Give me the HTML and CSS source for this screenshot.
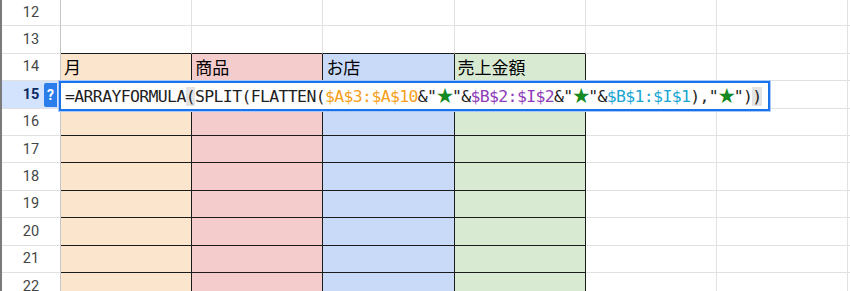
FILE: index.html
```html
<!DOCTYPE html>
<html lang="ja">
  <head>
    <meta charset="UTF-8" />
    <meta name="viewport" content="width=device-width, initial-scale=1.0" />
    <title>Sheet</title>
    <link rel="stylesheet" href="styles.css">
  </head>
  <body>
    <div class="sheet">
      <!-- row 12 -->
      <div class="rh">12</div>
      <div class="cell"></div><div class="cell"></div><div class="cell"></div><div class="cell"></div>
      <div class="cell"></div><div class="cell"></div><div class="cell"></div>
      <!-- row 13 -->
      <div class="rh">13</div>
      <div class="cell top-edge"></div><div class="cell top-edge"></div><div class="cell top-edge"></div><div class="cell top-edge"></div>
      <div class="cell"></div><div class="cell"></div><div class="cell"></div>
      <!-- row 14: headers -->
      <div class="rh">14</div>
      <div class="cell data month head">月</div>
      <div class="cell data item head">商品</div>
      <div class="cell data shop head">お店</div>
      <div class="cell data sales head">売上金額</div>
      <div class="cell"></div><div class="cell"></div><div class="cell"></div>
      <!-- row 15 -->
      <div class="rh selected">15</div>
      <div class="cell data month"></div><div class="cell data item"></div><div class="cell data shop"></div><div class="cell data sales"></div>
      <div class="cell"></div><div class="cell"></div><div class="cell"></div>
      <!-- row 16 -->
      <div class="rh">16</div>
      <div class="cell data month"></div><div class="cell data item"></div><div class="cell data shop"></div><div class="cell data sales"></div>
      <div class="cell"></div><div class="cell"></div><div class="cell"></div>
      <!-- row 17 -->
      <div class="rh">17</div>
      <div class="cell data month"></div><div class="cell data item"></div><div class="cell data shop"></div><div class="cell data sales"></div>
      <div class="cell"></div><div class="cell"></div><div class="cell"></div>
      <!-- row 18 -->
      <div class="rh">18</div>
      <div class="cell data month"></div><div class="cell data item"></div><div class="cell data shop"></div><div class="cell data sales"></div>
      <div class="cell"></div><div class="cell"></div><div class="cell"></div>
      <!-- row 19 -->
      <div class="rh">19</div>
      <div class="cell data month"></div><div class="cell data item"></div><div class="cell data shop"></div><div class="cell data sales"></div>
      <div class="cell"></div><div class="cell"></div><div class="cell"></div>
      <!-- row 20 -->
      <div class="rh">20</div>
      <div class="cell data month"></div><div class="cell data item"></div><div class="cell data shop"></div><div class="cell data sales"></div>
      <div class="cell"></div><div class="cell"></div><div class="cell"></div>
      <!-- row 21 -->
      <div class="rh">21</div>
      <div class="cell data month"></div><div class="cell data item"></div><div class="cell data shop"></div><div class="cell data sales"></div>
      <div class="cell"></div><div class="cell"></div><div class="cell"></div>
      <!-- row 22 -->
      <div class="rh">22</div>
      <div class="cell data month"></div><div class="cell data item"></div><div class="cell data shop"></div><div class="cell data sales"></div>
      <div class="cell"></div><div class="cell"></div><div class="cell"></div>

      <!-- formula being edited in B15 area -->
      <div class="editor">
        <div class="hint">?</div>
        <div class="formula">=ARRAYFORMULA<span class="match">(</span>SPLIT(FLATTEN(<span class="ref1">$A$3:$A$10</span>&amp;"<span class="star">★</span>"&amp;<span class="ref2">$B$2:$I$2</span>&amp;"<span class="star">★</span>"&amp;<span class="ref3">$B$1:$I$1</span>),"<span class="star">★</span>")<span class="match">)</span></div>
      </div>
    </div>
  </body>
</html>
```

FILE: styles.css
```css
* {
  margin: 0;
  padding: 0;
  box-sizing: border-box;
}
body {
  background: #fff;
  overflow: hidden;
  font-family: Roboto, "Liberation Sans", Arial, sans-serif;
}

.sheet {
  position: relative;
  display: grid;
  grid-template-columns: 59px repeat(7, 131.2px);
  grid-auto-rows: 27.4px;
  margin-top: -1px;
  border-left: 2px solid #7b7b7b;
}

.rh {
  display: flex;
  align-items: center;
  justify-content: center;
  font-size: 14.5px;
  color: #444746;
  border-right: 1px solid #c4c7c5;
  border-bottom: 1px solid #e1e1e1;
}
.rh.selected {
  background-color: #d3e3fd;
  color: #0b2a63;
  font-weight: 700;
}

.cell {
  border-right: 1px solid #e1e1e1;
  border-bottom: 1px solid #e1e1e1;
}
.cell.top-edge {
  border-bottom-color: #1b1b1b;
}
.cell.data {
  border-right-color: #1b1b1b;
  border-bottom-color: #1b1b1b;
}
.month { background-color: #fce5cd; }
.item { background-color: #f4cccc; }
.shop { background-color: #c9daf8; }
.sales { background-color: #d9ead3; }

.head {
  display: flex;
  align-items: flex-end;
  padding: 0 0 1px 3px;
  font-family: "Noto Sans CJK JP", sans-serif;
  font-size: 17px;
  line-height: 24px;
  color: #000;
}

.editor {
  position: absolute;
  left: 57px;
  top: 82px;
  width: 711px;
  height: 30px;
  background: #fff;
  border: 2px solid #1a73e8;
  box-shadow: 0 0 0 1px #a8c7fa;
}
.hint {
  position: absolute;
  left: -17px;
  top: 0;
  width: 13px;
  height: 24px;
  border-radius: 2px 0 0 2px;
  background-color: #2b7de9;
  color: #fff;
  font-weight: 700;
  font-size: 14px;
  line-height: 24px;
  text-align: center;
}
.formula {
  padding-left: 4px;
  font-family: "DejaVu Sans Mono", "Liberation Mono", monospace;
  font-size: 16.5px;
  letter-spacing: -0.65px;
  line-height: 24px;
  color: #1f1f1f;
  white-space: nowrap;
}
.match {
  background-color: #e3e3e3;
}
.ref1 { color: #f5a11c; }
.ref2 { color: #8e3cb8; }
.ref3 { color: #1aa6d2; }
.star {
  font-family: "Noto Sans CJK JP", sans-serif;
  font-size: 17px;
  letter-spacing: -1.5px;
  color: #138a22;
}
```
